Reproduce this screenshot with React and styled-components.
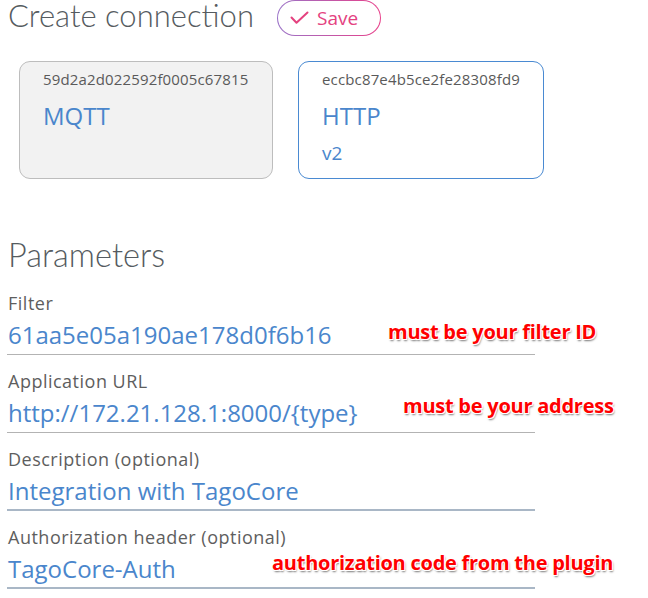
import React from 'react'
import styled, { createGlobalStyle } from 'styled-components'

const GlobalStyle = createGlobalStyle`
  body {
    margin: 0;
    background: #fff;
    font-family: 'Open Sans', 'Liberation Sans', sans-serif;
  }
`

const Page = styled.div`
  width: 648px;
  height: 598px;
  padding-left: 8px;
  box-sizing: border-box;
  overflow: hidden;
`

const Header = styled.div`
  display: flex;
  align-items: flex-start;
  gap: 23px;
  height: 36px;
`

const Title = styled.h1`
  margin: -3px 0 0 0;
  font-family: Lato, 'Open Sans', sans-serif;
  font-weight: 300;
  font-size: 31px;
  color: #555b60;
  line-height: 1.2;
  white-space: nowrap;
`

const SaveButton = styled.button`
  display: flex;
  align-items: center;
  gap: 8px;
  height: 36px;
  width: 104px;
  padding: 0 0 0 12px;
  box-sizing: border-box;
  border: 1.5px solid transparent;
  border-radius: 18px;
  background: linear-gradient(#fff, #fff) padding-box,
    linear-gradient(90deg, #9a72c8, #e8408a) border-box;
  color: #e4427f;
  font-family: 'Open Sans', sans-serif;
  font-size: 19px;
  line-height: 24px;
  cursor: pointer;
`

const Cards = styled.div`
  display: flex;
  gap: 25px;
  margin: 25px 0 0 11px;
`

const Card = styled.div`
  width: ${(p) => p.$width}px;
  height: 118px;
  box-sizing: border-box;
  padding: 7px 0 0 23px;
  border-radius: 11px;
  border: 1.5px solid ${(p) => (p.$active ? '#4a8ad2' : '#bdbdbd')};
  background: ${(p) => (p.$active ? '#fff' : '#f2f2f2')};
`

const CardId = styled.div`
  font-size: 15px;
  letter-spacing: 0.15px;
  color: #5a5a5a;
  line-height: 20px;
`

const CardName = styled.div`
  margin-top: 11px;
  font-size: 24px;
  color: #4a86cc;
  line-height: 32px;
`

const CardVersion = styled.div`
  margin-top: 9px;
  font-size: 19px;
  color: #4a86cc;
  line-height: 24px;
`

const Section = styled.h2`
  margin: 58px 0 0 0;
  font-family: Lato, 'Open Sans', sans-serif;
  font-weight: 300;
  font-size: 32.5px;
  color: #555b60;
  line-height: 36px;
`

const Field = styled.div`
  position: relative;
  width: 528px;
  margin-top: ${(p) => p.$top}px;
  margin-left: -1px;
  border-bottom: ${(p) => (p.$focus ? '2px solid #a9b7c6' : '1px solid #b3b3b3')};
  padding-bottom: ${(p) => (p.$focus ? 2 : 3)}px;
`

const Label = styled.div`
  padding-left: 1px;
  font-size: 18px;
  letter-spacing: 0.5px;
  color: #5e5e5e;
  line-height: 24px;
`

const Value = styled.div`
  margin-top: 4px;
  padding-left: 1px;
  font-size: 24px;
  color: #4a86cc;
  line-height: 32px;
`

const Note = styled.span`
  position: absolute;
  left: ${(p) => p.$left}px;
  top: ${(p) => p.$top}px;
  white-space: nowrap;
  font-family: 'Open Sans', sans-serif;
  font-weight: 700;
  font-size: 20px;
  letter-spacing: -0.25px;
  color: #ff0000;
  text-shadow: -1px -1px 0 #fff, 1px -1px 0 #fff, -1px 1px 0 #fff, 1px 1px 0 #fff,
    1px 2px 2px #777;
`

const fields = [
  {
    label: 'Filter',
    value: '61aa5e05a190ae178d0f6b16',
    note: 'must be your filter ID',
    left: 381,
    noteTop: 27,
    top: 18,
  },
  {
    label: 'Application URL',
    value: 'http://172.21.128.1:8000/{type}',
    note: 'must be your address',
    left: 396,
    noteTop: 23,
    top: 14,
  },
  { label: 'Description (optional)', value: 'Integration with TagoCore', focus: true, top: 14 },
  {
    label: 'Authorization header (optional)',
    value: 'TagoCore-Auth',
    note: 'authorization code from the plugin',
    left: 265,
    noteTop: 24,
    focus: true,
    top: 14,
  },
]

const Check = () => (
  <svg width="19" height="14" viewBox="0 0 19 14" fill="none">
    <path d="M1.5 6.5 L6.5 11.8 L17.5 1.5" stroke="#e4427f" strokeWidth="2" strokeLinecap="round" strokeLinejoin="round" />
  </svg>
)

const App = () => {
  return (
    <Page>
      <GlobalStyle />
      <Header>
        <Title>Create connection</Title>
        <SaveButton>
          <Check />
          Save
        </SaveButton>
      </Header>
      <Cards>
        <Card $width={254}>
          <CardId>59d2a2d022592f0005c67815</CardId>
          <CardName>MQTT</CardName>
        </Card>
        <Card $width={246} $active>
          <CardId>eccbc87e4b5ce2fe28308fd9</CardId>
          <CardName>HTTP</CardName>
          <CardVersion>v2</CardVersion>
        </Card>
      </Cards>
      <Section>Parameters</Section>
      {fields.map((f) => (
        <Field key={f.label} $focus={f.focus} $top={f.top}>
          <Label>{f.label}</Label>
          <Value>{f.value}</Value>
          {f.note && (
            <Note $left={f.left} $top={f.noteTop}>
              {f.note}
            </Note>
          )}
        </Field>
      ))}
    </Page>
  )
}

export default App
